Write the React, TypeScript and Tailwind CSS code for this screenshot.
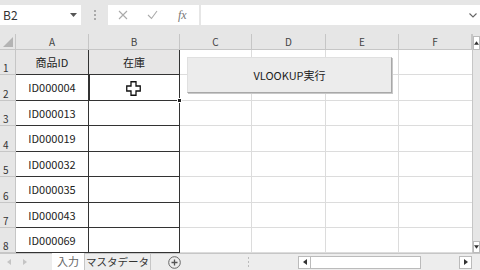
import React from 'react'

const cols = [
  { name: 'A', w: 73 },
  { name: 'B', w: 91 },
  { name: 'C', w: 72 },
  { name: 'D', w: 74 },
  { name: 'E', w: 73 },
  { name: 'F', w: 73 },
]

const rows = [
  { n: 1, h: 25, a: '商品ID', b: '在庫' },
  { n: 2, h: 26, a: 'ID000004', b: '' },
  { n: 3, h: 25, a: 'ID000013', b: '' },
  { n: 4, h: 26, a: 'ID000019', b: '' },
  { n: 5, h: 25, a: 'ID000032', b: '' },
  { n: 6, h: 26, a: 'ID000035', b: '' },
  { n: 7, h: 25, a: 'ID000043', b: '' },
  { n: 8, h: 25, a: 'ID000069', b: '' },
]

const font = { fontFamily: '"Noto Sans CJK JP", "Noto Sans", sans-serif' }

function Cell({ w, children, className = '' }: { w: number; children?: React.ReactNode; className?: string }) {
  return (
    <div style={{ width: w }} className={`shrink-0 h-full flex items-center justify-center ${className}`}>
      {children}
    </div>
  )
}

export default function App() {
  return (
    <div className="w-[480px] h-[270px] bg-white overflow-hidden relative text-[#222]" style={font}>
      {/* Formula bar */}
      <div className="h-[34px] bg-[#e6e6e6] flex items-start pt-[5px]">
        <div className="w-[81px] h-[20px] bg-white flex items-center justify-between pl-[3px] pr-[4px]">
          <span className="text-[12px] text-[#333] leading-none">B2</span>
          <svg width="7" height="4" viewBox="0 0 7 4"><path d="M0 0h7L3.5 4z" fill="#555" /></svg>
        </div>
        <div className="w-[27px] h-[20px] flex flex-col items-center justify-center gap-[2px]">
          <span className="w-[2px] h-[2px] bg-[#aaa]" />
          <span className="w-[2px] h-[2px] bg-[#aaa]" />
          <span className="w-[2px] h-[2px] bg-[#aaa]" />
        </div>
        <div className="w-[91px] h-[20px] bg-white flex items-center">
          <svg className="ml-[10px]" width="10" height="10" viewBox="0 0 10 10"><path d="M1 1l8 8M9 1l-8 8" stroke="#aaa" strokeWidth="1.1" /></svg>
          <svg className="ml-[19px]" width="11" height="10" viewBox="0 0 11 10"><path d="M1 5l3.5 3.5L10 1" stroke="#aaa" strokeWidth="1.1" fill="none" /></svg>
          <span className="ml-[20px] text-[12px] italic text-[#777] leading-none" style={{ fontFamily: '"Liberation Serif", serif' }}>fx</span>
        </div>
        <div className="ml-[2px] flex-1 h-[20px] bg-white flex items-center justify-end pr-[3px]">
          <svg width="8" height="5" viewBox="0 0 8 5"><path d="M0.5 0.5l3.5 3.5 3.5-3.5" stroke="#666" strokeWidth="1.1" fill="none" /></svg>
        </div>
      </div>

      <div className="flex h-[219px]">
        <div className="flex-1 flex flex-col">
          {/* Column headers */}
          <div className="h-[16px] flex bg-[#e6e6e6] border-b border-[#c6c6c6]">
            <div className="w-[16px] shrink-0 h-full flex items-end justify-end p-[2px] border-r border-[#c6c6c6]">
              <svg width="10" height="10" viewBox="0 0 10 10"><path d="M10 0v10H0z" fill="#b4b4b4" /></svg>
            </div>
            {cols.map(c => (
              <Cell key={c.name} w={c.w} className="border-r border-[#c6c6c6] text-[10px] text-[#444]">
                {c.name}
              </Cell>
            ))}
          </div>
          {/* Rows */}
          {rows.map(r => (
            <div key={r.n} style={{ height: r.h }} className="flex shrink-0">
              <div className="w-[16px] shrink-0 h-full bg-[#e6e6e6] border-r border-b border-[#c6c6c6] flex items-end pl-[3px] pb-[1px] text-[10px] text-[#333] leading-none">
                {r.n}
              </div>
              <Cell w={73} className={`border-r border-b border-[#333] text-[11px] ${r.n === 1 ? 'bg-[#e7e6e6]' : ''}`}>
                {r.a}
              </Cell>
              <Cell w={91} className={`border-r border-b border-[#333] text-[11px] ${r.n === 1 ? 'bg-[#e7e6e6]' : ''} ${r.n === 2 ? 'border-2 border-t-0 border-l border-[#222] relative' : ''}`}>
                {r.b}
                {r.n === 2 && <span className="absolute -right-[3px] -bottom-[3px] w-[5px] h-[5px] bg-[#222] border border-white" />}
              </Cell>
              <Cell w={72} className="border-r border-b border-[#dcdcdc]" />
              <Cell w={74} className="border-r border-b border-[#dcdcdc]" />
              <Cell w={73} className="border-r border-b border-[#dcdcdc]" />
              <Cell w={73} className="border-b border-[#dcdcdc]" />
            </div>
          ))}
        </div>
        {/* Vertical scrollbar */}
        <div className="w-[8px] shrink-0 bg-[#e6e6e6] flex flex-col justify-between border-l border-[#c6c6c6]">
          <div className="h-[14px] mt-[2px] bg-white border border-[#bbb] flex items-center justify-center">
            <svg width="6" height="4" viewBox="0 0 6 4"><path d="M3 0l3 4H0z" fill="#333" /></svg>
          </div>
          <div className="h-[12px] bg-white border border-[#bbb] flex items-center justify-center">
            <svg width="6" height="4" viewBox="0 0 6 4"><path d="M0 0h6L3 4z" fill="#333" /></svg>
          </div>
        </div>
      </div>

      {/* Sheet tabs + horizontal scrollbar */}
      <div className="h-[17px] bg-[#ededed] border-t border-[#c6c6c6] flex items-stretch whitespace-nowrap">
        <div className="w-[52px] shrink-0 flex items-center gap-[12px] pl-[7px]">
          <svg width="4" height="6" viewBox="0 0 4 6"><path d="M4 0v6L0 3z" fill="#c4c4c4" /></svg>
          <svg width="4" height="6" viewBox="0 0 4 6"><path d="M0 0v6l4-3z" fill="#c4c4c4" /></svg>
        </div>
        <div className="w-[33px] shrink-0 -mt-[1px] bg-white flex items-center justify-center text-[11px] text-[#666] border-r border-[#c6c6c6]">入力</div>
        <div className="w-[66px] shrink-0 flex items-center justify-center text-[10.5px] text-[#333] border-r border-[#c6c6c6]">マスタデータ</div>
        <div className="w-[47px] shrink-0 flex items-center justify-center">
          <svg width="13" height="13" viewBox="0 0 13 13"><circle cx="6.5" cy="6.5" r="5.8" stroke="#666" fill="none" /><path d="M6.5 3.5v6M3.5 6.5h6" stroke="#555" strokeWidth="1.3" /></svg>
        </div>
        <div className="w-[100px] shrink-0 flex items-center justify-center">
          <div className="flex flex-col gap-[2px]">
            <span className="w-[1px] h-[2px] bg-[#bbb]" />
            <span className="w-[1px] h-[2px] bg-[#bbb]" />
            <span className="w-[1px] h-[2px] bg-[#bbb]" />
          </div>
        </div>
        <div className="flex-1 flex items-center pr-[8px]">
          <div className="w-[13px] h-[13px] bg-white border border-[#bbb] flex items-center justify-center">
            <svg width="4" height="6" viewBox="0 0 4 6"><path d="M4 0v6L0 3z" fill="#333" /></svg>
          </div>
          <div className="w-[110px] h-[13px] bg-white border border-l-0 border-[#bbb]" />
          <div className="flex-1" />
          <div className="w-[13px] h-[13px] bg-white border border-[#bbb] flex items-center justify-center">
            <svg width="4" height="6" viewBox="0 0 4 6"><path d="M0 0v6l4-3z" fill="#333" /></svg>
          </div>
        </div>
      </div>

      {/* Button shape over the sheet */}
      <div className="absolute left-[187px] top-[57px] w-[205px] h-[36px] bg-[#ececec] border border-[#e0e0e0] border-r-[#a8a8a8] border-b-[#a8a8a8] shadow-[1px_1px_0_#c8c8c8] flex items-center justify-center text-[11px] text-[#222]">
        VLOOKUP実行
      </div>

      {/* Mouse cursor */}
      <svg className="absolute left-[126px] top-[81px]" width="15" height="15" viewBox="0 0 15 15">
        <path d="M5 0.75h5v4.25h4.25v5h-4.25v4.25h-5v-4.25h-4.25v-5h4.25z" fill="#fff" stroke="#111" strokeWidth="1.3" />
      </svg>
    </div>
  )
}
